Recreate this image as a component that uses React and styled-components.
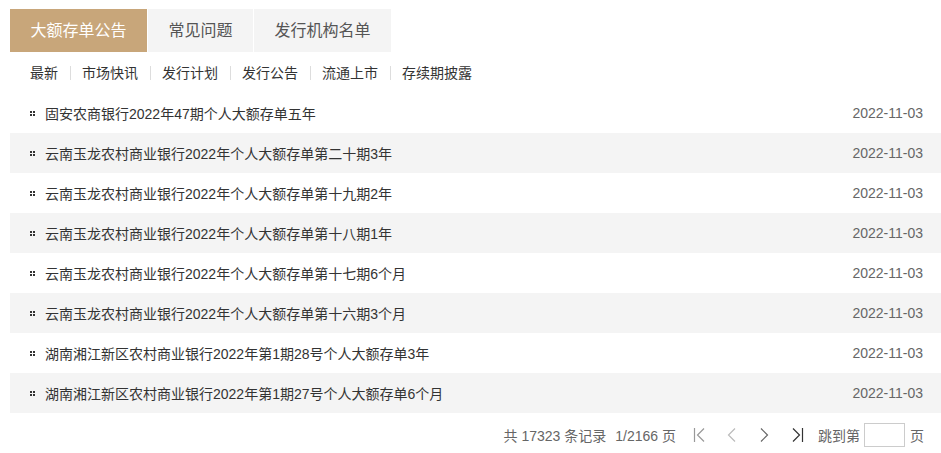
import React, { useState } from "react";
import styled, { createGlobalStyle } from "styled-components";

const GlobalStyle = createGlobalStyle`
  body {
    margin: 0;
    background: #fff;
    font-family: "Liberation Sans", "Noto Sans CJK SC", sans-serif;
  }
`;

const Wrapper = styled.div`
  padding: 9px 0 0 10px;
  width: 931px;
`;

const Tabs = styled.div`
  display: flex;
  gap: 1px;
`;

const Tab = styled.div`
  height: 43px;
  line-height: 43px;
  padding: 0 20.5px;
  font-size: 16px;
  background: ${(p) => (p.active ? "#c8a67a" : "#f4f4f4")};
  color: ${(p) => (p.active ? "#fff" : "#555")};
  cursor: pointer;
`;

const SubNav = styled.div`
  display: flex;
  align-items: center;
  height: 41px;
  padding-left: 8.5px;
`;

const SubItem = styled.div`
  font-size: 14px;
  color: #333;
  padding: 0 11.5px;
  line-height: 14px;
  border-left: ${(p) => (p.first ? "none" : "1px solid #ddd")};
  cursor: pointer;
`;

const List = styled.div`
  display: flex;
  flex-direction: column;
`;

const Row = styled.div`
  display: flex;
  align-items: center;
  height: 40px;
  padding: 0 18px 0 20px;
  background: ${(p) => (p.odd ? "#f4f4f4" : "#fff")};
  font-size: 14px;
`;

const Title = styled.div`
  flex: 1;
  color: #333;
  margin-left: 10px;
`;

const Date = styled.div`
  color: #666;
`;

const Pager = styled.div`
  display: flex;
  align-items: center;
  justify-content: flex-end;
  height: 44px;
  padding-right: 17px;
  font-size: 14px;
  color: #666;
`;

const PageText = styled.span`
  margin-right: ${(p) => p.gap || 0}px;
  margin-left: ${(p) => p.lead || 0}px;
`;

const PageBtn = styled.div`
  width: 33px;
  display: flex;
  justify-content: center;
  align-items: center;
  cursor: pointer;
`;

const JumpInput = styled.input`
  width: 41px;
  height: 24px;
  box-sizing: border-box;
  border: 1px solid #ccc;
  margin: 0 5px 0 4px;
  outline: none;
`;

const Dots = () => (
  <svg width="5" height="5" viewBox="0 0 5 5">
    <rect x="0" y="0" width="2" height="2" fill="#333" />
    <rect x="3" y="0" width="2" height="2" fill="#333" />
    <rect x="0" y="3" width="2" height="2" fill="#333" />
    <rect x="3" y="3" width="2" height="2" fill="#333" />
  </svg>
);

const Icon = ({ type, color }) => {
  const paths = {
    first: "M1.5 1 V15 M11 1.5 L4.5 8 L11 14.5",
    prev: "M9 1.5 L2.5 8 L9 14.5",
    next: "M2 1.5 L8.5 8 L2 14.5",
    last: "M1 1.5 L7.5 8 L1 14.5 M10.5 1 V15",
  };
  return (
    <svg width="12" height="16" viewBox="0 0 12 16">
      <path d={paths[type]} fill="none" stroke={color} strokeWidth="1.2" />
    </svg>
  );
};

const tabs = ["大额存单公告", "常见问题", "发行机构名单"];
const subs = ["最新", "市场快讯", "发行计划", "发行公告", "流通上市", "存续期披露"];
const items = [
  "固安农商银行2022年47期个人大额存单五年",
  "云南玉龙农村商业银行2022年个人大额存单第二十期3年",
  "云南玉龙农村商业银行2022年个人大额存单第十九期2年",
  "云南玉龙农村商业银行2022年个人大额存单第十八期1年",
  "云南玉龙农村商业银行2022年个人大额存单第十七期6个月",
  "云南玉龙农村商业银行2022年个人大额存单第十六期3个月",
  "湖南湘江新区农村商业银行2022年第1期28号个人大额存单3年",
  "湖南湘江新区农村商业银行2022年第1期27号个人大额存单6个月",
];

export default function App() {
  const [active, setActive] = useState(0);
  return (
    <Wrapper>
      <GlobalStyle />
      <Tabs>
        {tabs.map((t, i) => (
          <Tab key={t} active={i === active} onClick={() => setActive(i)}>
            {t}
          </Tab>
        ))}
      </Tabs>
      <SubNav>
        {subs.map((s, i) => (
          <SubItem key={s} first={i === 0}>
            {s}
          </SubItem>
        ))}
      </SubNav>
      <List>
        {items.map((t, i) => (
          <Row key={t} odd={i % 2 === 1}>
            <Dots />
            <Title>{t}</Title>
            <Date>2022-11-03</Date>
          </Row>
        ))}
      </List>
      <Pager>
        <PageText gap={9}>共 17323 条记录</PageText>
        <PageText gap={6}>1/2166 页</PageText>
        <PageBtn><Icon type="first" color="#999" /></PageBtn>
        <PageBtn><Icon type="prev" color="#bbb" /></PageBtn>
        <PageBtn><Icon type="next" color="#666" /></PageBtn>
        <PageBtn><Icon type="last" color="#333" /></PageBtn>
        <PageText lead={4}>跳到第</PageText>
        <JumpInput />
        <PageText>页</PageText>
      </Pager>
    </Wrapper>
  );
}
